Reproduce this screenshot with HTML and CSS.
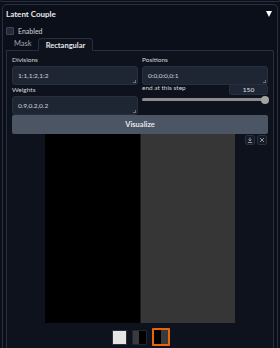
FILE: index.html
```html
<!DOCTYPE html>
<html>
<head>
<meta charset="utf-8">
<link rel="stylesheet" href="styles.css">
</head>
<body>
<div class="prev-edge"></div>
<div class="block">
  <div class="acc-head">
    <span class="acc-title">Latent Couple</span>
    <span class="tri"></span>
  </div>
  <label class="check-row"><span class="check"></span><span class="check-label">Enabled</span></label>
  <div class="tabs">
    <div class="tab-nav">
      <span class="tab">Mask</span>
      <span class="tab active">Rectangular</span>
    </div>
    <div class="tab-panel">
      <div class="grid">
        <div class="field">
          <div class="label">Divisions</div>
          <div class="input">1:1,1:2,1:2<span class="grip"></span></div>
        </div>
        <div class="field">
          <div class="label">Positions</div>
          <div class="input">0:0,0:0,0:1<span class="grip"></span></div>
        </div>
        <div class="field">
          <div class="label">Weights</div>
          <div class="input short">0.9,0.2,0.2<span class="grip"></span></div>
        </div>
        <div class="field slider-field">
          <div class="slider-top">
            <span class="label">end at this step</span>
            <span class="num">150</span>
          </div>
          <div class="track"><span class="thumb"></span></div>
        </div>
      </div>
      <div class="btn">Visualize</div>
      <div class="gallery">
        <div class="icons">
          <span class="ico"><svg width="6" height="6" viewBox="0 0 6 6"><path d="M3 0.5v3.5M1.5 2.5L3 4l1.5-1.5M0.8 5.5h4.4" stroke="#9ca3af" stroke-width="0.9" fill="none"/></svg></span>
          <span class="ico"><svg width="6" height="6" viewBox="0 0 6 6"><path d="M1 1l4 4M5 1L1 5" stroke="#9ca3af" stroke-width="0.9" fill="none"/></svg></span>
        </div>
        <div class="preview"><div class="half black"></div><div class="half gray"></div></div>
      </div>
      <div class="thumbs">
        <span class="th white"></span>
        <span class="th split1"><span class="g"></span><span class="b"></span></span>
        <span class="th split2 sel"><span class="b"></span><span class="g"></span></span>
      </div>
    </div>
  </div>
</div>
</body>
</html>
```

FILE: styles.css
```css
* { box-sizing: border-box; }
html, body { margin: 0; padding: 0; }
body {
  width: 280px;
  height: 348px;
  overflow: hidden;
  background: #0b0f19;
  font-family: Lato, "Noto Sans", sans-serif;
  color: #e5e7eb;
  font-size: 7.5px;
}
.prev-edge {
  height: 2px;
  border: 1px solid #283040;
  border-top: none;
  border-radius: 0 0 5px 5px;
}
.block {
  margin: 2px 2px 0;
  border: 1px solid #283040;
  border-bottom: none;
  border-radius: 5px 5px 0 0;
  padding: 0 3px 0 3px;
  height: 400px;
}
.acc-head {
  display: flex;
  align-items: center;
  justify-content: space-between;
  height: 16px;
  padding-top: 1px;
}
.acc-title { font-weight: 700; font-size: 8px; color: #e5e7eb; }
.tri {
  width: 0; height: 0;
  border-left: 3.5px solid transparent;
  border-right: 3.5px solid transparent;
  border-top: 6px solid #ffffff;
  margin-right: 2px;
}
.check-row {
  display: flex;
  align-items: center;
  gap: 4px;
  margin-top: 5px;
  height: 9px;
}
.check {
  flex: none;
  display: block;
  width: 8px; height: 8px;
  background: #222b3a;
  border: 1px solid #3a4456;
  border-radius: 1px;
}
.check-label { font-size: 7px; color: #d1d5db; }
.tabs { margin-top: 2px; }
.tab-nav {
  display: flex;
  align-items: flex-end;
  height: 13px;
  padding-left: 2px;
}
.tab {
  font-size: 7.5px;
  color: #9ca3af;
  padding: 0 6px;
  height: 13px;
  line-height: 13px;
}
.tab.active {
  color: #e5e7eb;
  font-weight: 700;
  border: 1px solid #283040;
  border-bottom: 1px solid #0d121d;
  border-radius: 4px 4px 0 0;
  background: #0d121d;
  margin-bottom: -1px;
  padding: 0 7px;
  position: relative;
  z-index: 1;
}
.tab-panel {
  border: 1px solid #283040;
  border-bottom: none;
  border-radius: 0 3px 0 0;
  background: #0d121d;
  padding: 4px 5px 0 5px;
  height: 320px;
}
.grid {
  display: grid;
  grid-template-columns: 1fr 1fr;
  column-gap: 4px;
}
.label { font-size: 6.5px; color: #d1d5db; height: 10px; line-height: 10px; }
.field { display: flex; flex-direction: column; }
.input {
  position: relative;
  margin-top: 1px;
  height: 19px;
  background: #1f2633;
  border: 1px solid #273041;
  border-radius: 3px;
  font-size: 6.5px;
  color: #d1d5db;
  padding: 0 5px;
  line-height: 18px;
}
.grip {
  position: absolute;
  right: 1px; bottom: 1px;
  width: 3px; height: 3px;
  border-right: 1px solid #6b7280;
  border-bottom: 1px solid #6b7280;
}
.slider-top {
  display: flex;
  justify-content: space-between;
  align-items: flex-end;
}
.slider-top .label { height: 10px; line-height: 6px; }
.num {
  width: 39px;
  height: 11px;
  background: #1f2633;
  border: 1px solid #273041;
  border-radius: 3px;
  font-size: 6.5px;
  text-align: center;
  line-height: 9px;
  color: #e5e7eb;
  margin-top: -2px;
}
.slider-field .slider-top { margin-top: -3px; height: 13px; }
.track {
  position: relative;
  margin-top: 3px;
  height: 3px;
  border-radius: 2px;
  background: #8c8c8c;
  margin-right: 2px;
}
.thumb {
  position: absolute;
  right: -3px;
  top: -2.5px;
  width: 8px; height: 8px;
  border-radius: 50%;
  background: #a3a3a3;
}
.btn {
  margin-top: 0;
  height: 19px;
  background: #4b5563;
  border-radius: 2px;
  text-align: center;
  line-height: 19px;
  font-weight: 700;
  font-size: 7.5px;
  color: #e5e7eb;
}
.gallery {
  position: relative;
  display: flex;
  justify-content: center;
}
.preview {
  display: flex;
  width: 190px;
  height: 189px;
}
.half { flex: 1; }
.black { background: #000; border-right: 1px solid #1a1a1a; }
.gray { background: #363636; }
.icons {
  position: absolute;
  right: 1px;
  top: 1px;
  display: flex;
  gap: 2px;
}
.ico {
  width: 10px; height: 10px;
  border: 1px solid #283040;
  border-radius: 2px;
  background: #141a26;
  display: flex;
  align-items: center;
  justify-content: center;
}
.thumbs {
  display: flex;
  justify-content: center;
  align-items: center;
  gap: 5px;
  margin-top: 5px;
  padding-left: 1px;
}
.th {
  display: flex;
  width: 15px;
  height: 15px;
  border: 1px solid #1f2633;
  border-radius: 1px;
}
.th.white { background: #e5e5e5; border-color: #2a2f3a; }
.th .g { flex: 1; background: #3a3a3a; }
.th .b { flex: 1; background: #000; }
.th.sel {
  width: 18px; height: 18px;
  border: 2px solid #e8650f;
}
```
